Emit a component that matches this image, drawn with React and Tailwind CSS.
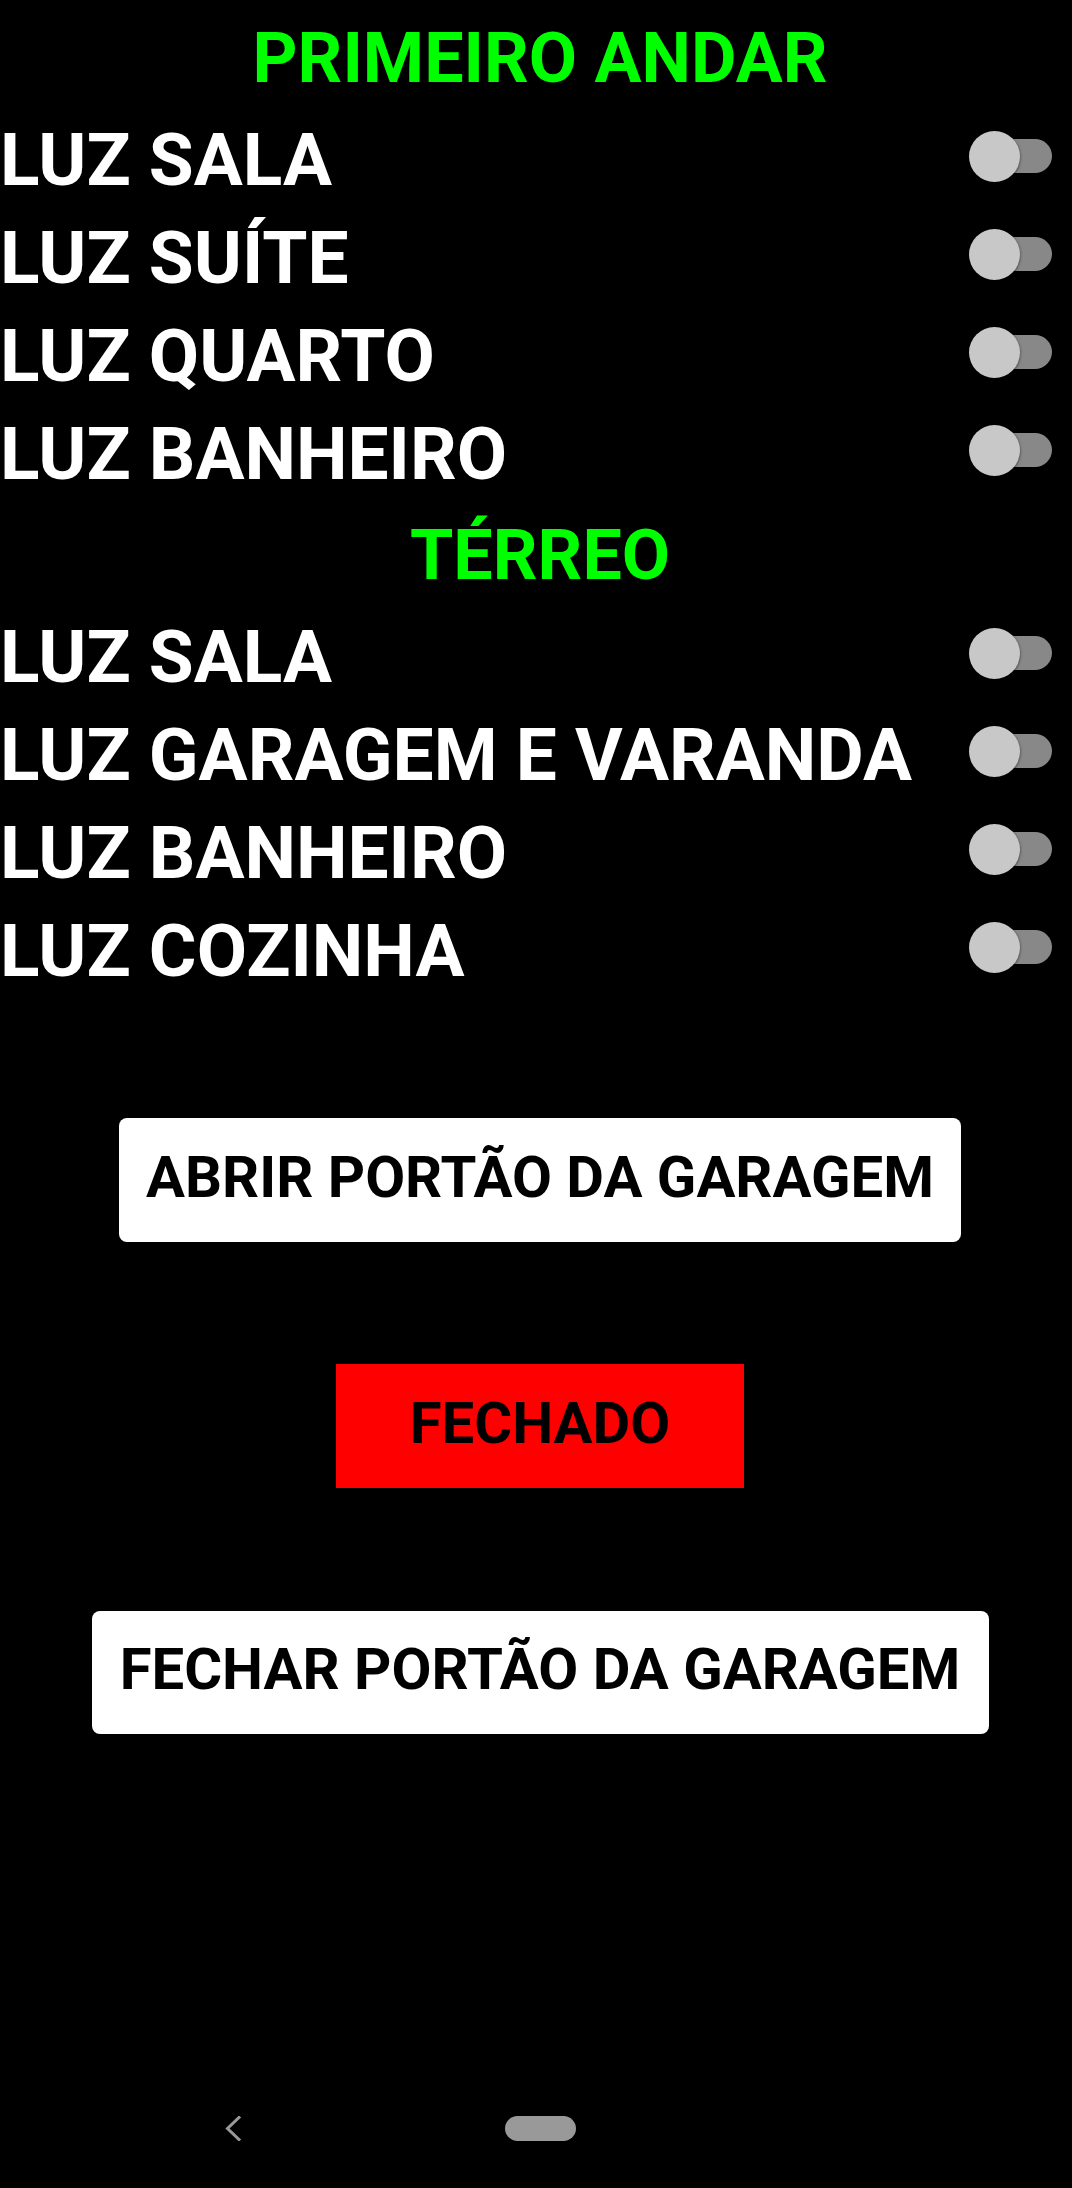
const PRIMEIRO_ANDAR = ['LUZ SALA', 'LUZ SUÍTE', 'LUZ QUARTO', 'LUZ BANHEIRO']
const TERREO = ['LUZ SALA', 'LUZ GARAGEM E VARANDA', 'LUZ BANHEIRO', 'LUZ COZINHA']

const fonte = { fontFamily: 'Roboto, "Liberation Sans", sans-serif' }

export default function App() {
  return (
    <div className="h-[2188px] w-[1072px] bg-black flex flex-col overflow-hidden" style={fonte}>
      <main className="flex-1 flex flex-col">
        <Titulo className="mt-[9px] mb-[4px]">PRIMEIRO ANDAR</Titulo>
        {PRIMEIRO_ANDAR.map((nome) => (
          <Linha key={nome} nome={nome} />
        ))}
        <Titulo className="mt-[3px] mb-[4px]">TÉRREO</Titulo>
        {TERREO.map((nome) => (
          <Linha key={nome} nome={nome} />
        ))}

        <div className="flex justify-center pl-[8px] mt-[118px]">
          <button className="w-[842px] h-[124px] pb-[7px] bg-white rounded-lg text-black font-bold text-[58px] leading-none">
            ABRIR PORTÃO DA GARAGEM
          </button>
        </div>

        <div className="flex justify-center pl-[8px] mt-[122px]">
          <div className="w-[408px] h-[124px] pb-[7px] bg-[#ff0000] flex items-center justify-center text-black font-bold text-[58px] leading-none">
            FECHADO
          </div>
        </div>

        <div className="flex justify-center pl-[8px] mt-[123px]">
          <button className="w-[897px] h-[123px] pb-[7px] bg-white rounded-lg text-black font-bold text-[58px] leading-none">
            FECHAR PORTÃO DA GARAGEM
          </button>
        </div>
      </main>

      <nav className="h-[120px] flex items-start pt-[48px] pl-[221px]">
        <svg width="24" height="25" viewBox="0 0 24 25" fill="none">
          <path d="M18 1.5 L6.5 12.5 L18 23.5" stroke="#999999" strokeWidth="3" strokeLinecap="square" />
        </svg>
        <div className="ml-[260px] w-[71px] h-[25px] rounded-full bg-[#999999]" />
      </nav>
    </div>
  )
}

function Titulo({ children, className }) {
  return (
    <h1 className={`pl-[8px] text-center text-[#00ff00] font-bold text-[70px] leading-[98px] ${className}`}>
      {children}
    </h1>
  )
}

function Linha({ nome }) {
  return (
    <div className="h-[98px] flex items-start justify-between pr-[20px]">
      <span className="text-white font-bold text-[73px] leading-[98px] whitespace-nowrap">{nome}</span>
      <Chave />
    </div>
  )
}

function Chave() {
  return (
    <div className="relative mt-[20px] w-[83px] h-[51px] shrink-0">
      <div className="absolute right-0 top-[8px] w-[74px] h-[34px] rounded-full bg-[#888888]" />
      <div className="absolute left-0 top-0 w-[51px] h-[51px] rounded-full bg-[#c8c8c8] shadow-[0_1px_3px_rgba(0,0,0,0.6)]" />
    </div>
  )
}
